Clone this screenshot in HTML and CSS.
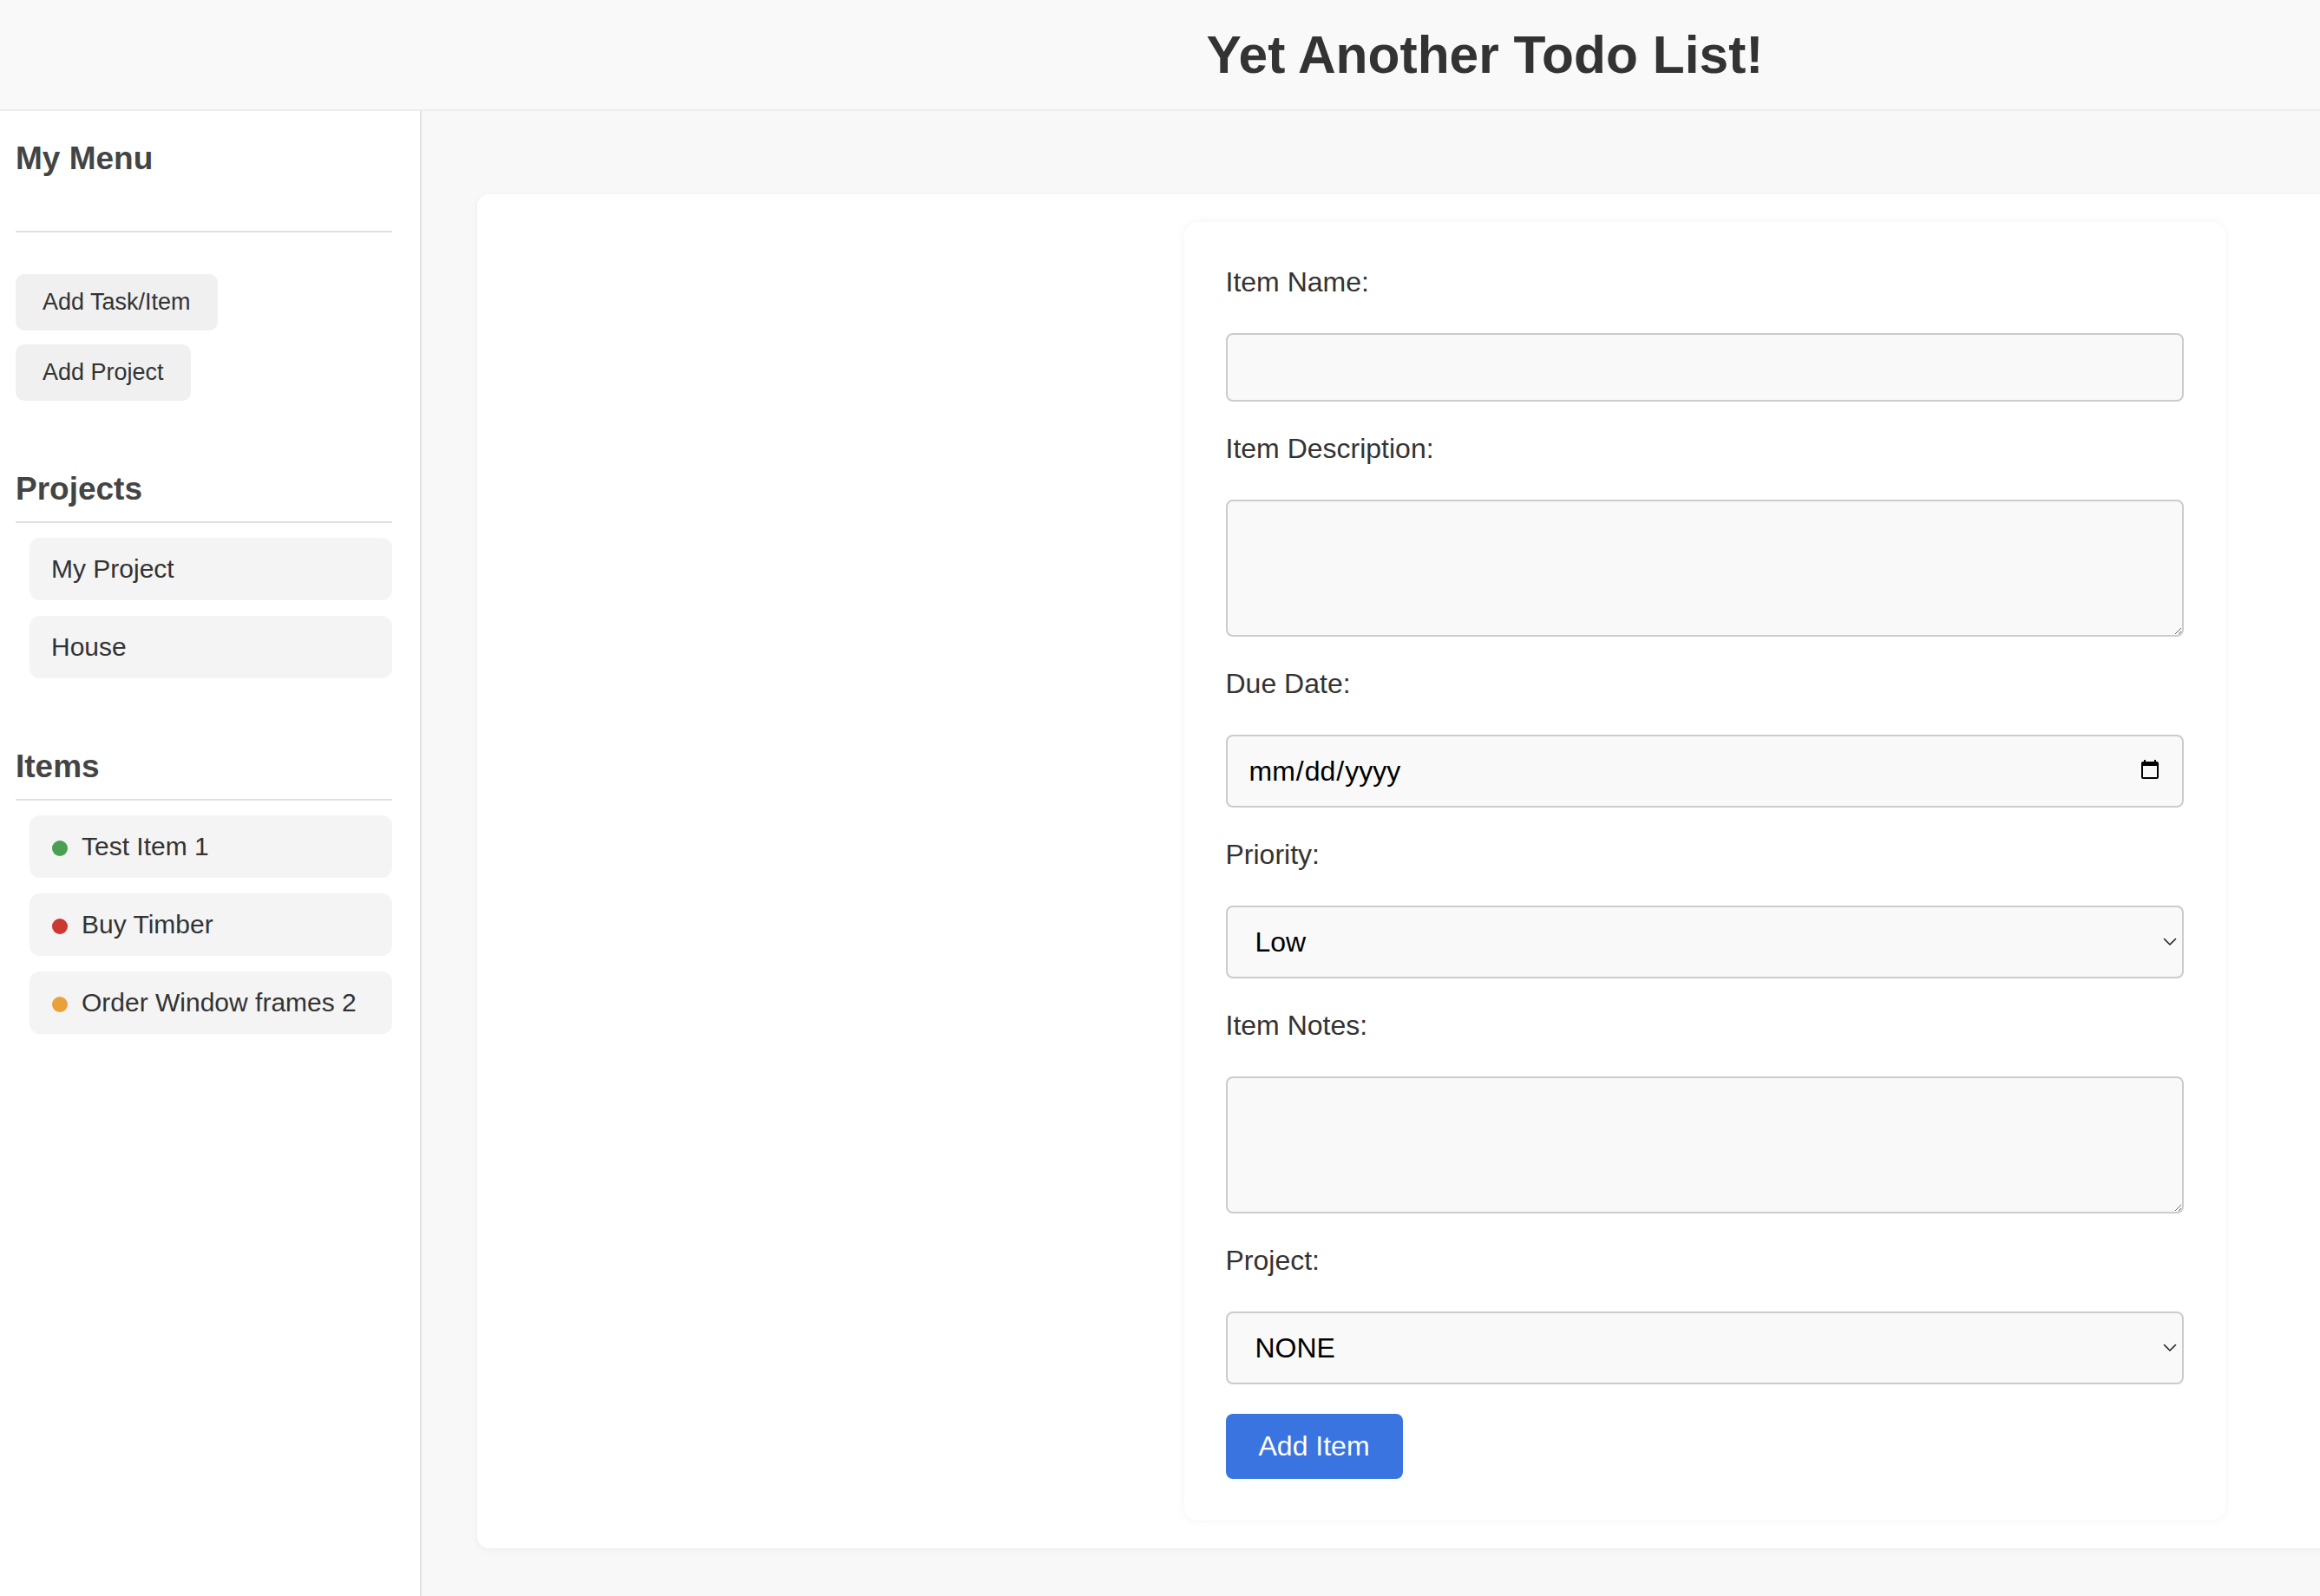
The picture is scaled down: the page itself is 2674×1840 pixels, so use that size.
FILE: index.html
```html
<!DOCTYPE html>
<html lang="en">
<head>
<meta charset="utf-8">
<title>Yet Another Todo List!</title>
<link rel="stylesheet" href="styles.css">
</head>
<body>
<div class="app">
  <header class="topbar">
    <h1 class="app-title">Yet Another Todo List!</h1>
  </header>
  <div class="layout">
    <aside class="sidebar">
      <h2 class="menu-title">My Menu</h2>
      <hr class="divider">
      <div class="menu-actions">
        <button class="menu-btn" type="button">Add Task/Item</button>
        <button class="menu-btn" type="button">Add Project</button>
      </div>
      <section class="side-section">
        <h2 class="section-title">Projects</h2>
        <hr class="divider">
        <ul class="side-list">
          <li class="side-item">My Project</li>
          <li class="side-item">House</li>
        </ul>
      </section>
      <section class="side-section">
        <h2 class="section-title">Items</h2>
        <hr class="divider">
        <ul class="side-list">
          <li class="side-item"><span class="dot dot-low"></span>Test Item 1</li>
          <li class="side-item"><span class="dot dot-high"></span>Buy Timber</li>
          <li class="side-item"><span class="dot dot-medium"></span>Order Window frames 2</li>
        </ul>
      </section>
    </aside>
    <main class="content">
      <section class="panel">
        <form class="item-form">
          <label class="field-label" for="name">Item Name:</label>
          <input class="field field-text" id="name" type="text">

          <label class="field-label" for="desc">Item Description:</label>
          <textarea class="field field-area" id="desc"></textarea>

          <label class="field-label" for="due">Due Date:</label>
          <input class="field field-date" id="due" type="date">

          <label class="field-label" for="priority">Priority:</label>
          <div class="select-wrap">
            <select class="field field-select" id="priority">
              <option>Low</option>
              <option>Medium</option>
              <option>High</option>
            </select>
            <svg class="chevron" width="16" height="10" viewBox="0 0 16 10"><polyline points="1.5,1.5 8,8 14.5,1.5" fill="none" stroke="#222" stroke-width="1.6" stroke-linecap="round" stroke-linejoin="round"/></svg>
          </div>

          <label class="field-label" for="notes">Item Notes:</label>
          <textarea class="field field-area" id="notes"></textarea>

          <label class="field-label" for="project">Project:</label>
          <div class="select-wrap">
            <select class="field field-select" id="project">
              <option>NONE</option>
              <option>My Project</option>
              <option>House</option>
            </select>
            <svg class="chevron" width="16" height="10" viewBox="0 0 16 10"><polyline points="1.5,1.5 8,8 14.5,1.5" fill="none" stroke="#222" stroke-width="1.6" stroke-linecap="round" stroke-linejoin="round"/></svg>
          </div>

          <button class="submit-btn" type="button">Add Item</button>
        </form>
      </section>
    </main>
  </div>
</div>
</body>
</html>
```

FILE: styles.css
```css
html, body {
  margin: 0;
  padding: 0;
  overflow: hidden;
  background: #f8f8f8;
}

body {
  font-family: "Liberation Sans", Arial, sans-serif;
  color: #333;
}

.app {
  width: 3443px;
  min-height: 100vh;
  display: flex;
  flex-direction: column;
}

.topbar {
  height: 126px;
  padding-right: 20px;
  background: #f9f9f9;
  border-bottom: 2px solid #ececec;
  display: flex;
  align-items: center;
  justify-content: center;
}

.app-title {
  margin: 0;
  font-size: 60.5px;
  font-weight: bold;
  color: #333;
}

.layout {
  flex: 1;
  display: flex;
}

.sidebar {
  box-sizing: border-box;
  flex: 0 0 486px;
  width: 486px;
  padding: 33px 32px 40px 18px;
  background: #fff;
  border-right: 2px solid #e2e2e2;
}

.menu-title,
.section-title {
  margin: 0;
  font-size: 37px;
  line-height: 44px;
  font-weight: bold;
  color: #444;
}

.menu-title {
  margin-bottom: 61px;
}

.section-title {
  margin-bottom: 15px;
}

.divider {
  margin: 0;
  border: 0;
  height: 2px;
  background: #e0e0e0;
}

.menu-actions {
  margin-top: 48px;
  display: flex;
  flex-direction: column;
  align-items: flex-start;
  gap: 16px;
}

.menu-btn {
  height: 65px;
  padding: 0 31px;
  border: 0;
  border-radius: 10px;
  background: #f0f0f0;
  color: #333;
  font-family: "Liberation Sans", Arial, sans-serif;
  font-size: 27px;
}

.side-section {
  margin-top: 80px;
}

.side-list {
  list-style: none;
  margin: 17px 0 0 16px;
  padding: 0;
  display: flex;
  flex-direction: column;
  gap: 18px;
}

.side-item {
  display: flex;
  align-items: center;
  padding: 19px 25px;
  line-height: 34px;
  font-size: 30px;
  color: #333;
  background: #f4f4f4;
  border-radius: 12px;
}

.dot {
  flex: 0 0 auto;
  width: 18px;
  height: 18px;
  margin: 3px 16px 0 1px;
  border-radius: 50%;
}

.dot-low { background: #4a9f52; }
.dot-high { background: #cc3832; }
.dot-medium { background: #e9a23b; }

.content {
  flex: 1;
  padding: 96px 64px 64px;
}

.panel {
  background: #fff;
  border-radius: 14px;
  padding: 32px;
  box-shadow: 0 2px 10px rgba(0, 0, 0, 0.05);
}

.item-form {
  box-sizing: border-box;
  width: 1200px;
  margin: 0 auto;
  padding: 48px;
  background: #fff;
  border-radius: 16px;
  box-shadow: 0 0 12px rgba(0, 0, 0, 0.05);
  display: flex;
  flex-direction: column;
  align-items: stretch;
}

.field-label {
  display: block;
  font-size: 32px;
  line-height: 42px;
  color: #333;
  margin-bottom: 38px;
}

.field {
  box-sizing: border-box;
  width: 100%;
  margin: 0 0 33px;
  border: 2px solid #cccccc;
  border-radius: 8px;
  background: #f9f9f9;
  color: #000;
  font-family: "Liberation Sans", Arial, sans-serif;
  font-size: 32px;
  outline: none;
}

.field-text {
  height: 79px;
  padding: 0 24px;
}

.field-area {
  display: block;
  height: 158px;
  padding: 16px 24px;
  resize: vertical;
}

.field-date {
  height: 84px;
  padding: 0 24px;
}

.field-date::-webkit-calendar-picker-indicator {
  width: 26px;
  height: 28px;
  margin-right: 0;
  padding: 0;
}

.select-wrap {
  position: relative;
}

.field-select {
  display: block;
  height: 84px;
  padding: 0 40px 0 32px;
  appearance: none;
  -webkit-appearance: none;
}

.chevron {
  position: absolute;
  right: 8px;
  top: 37px;
  pointer-events: none;
}

.submit-btn {
  align-self: flex-start;
  height: 75px;
  margin-top: 1px;
  padding: 0 38px;
  border: 0;
  border-radius: 8px;
  background: #3a74e0;
  color: #fff;
  font-family: "Liberation Sans", Arial, sans-serif;
  font-size: 32px;
}
```
